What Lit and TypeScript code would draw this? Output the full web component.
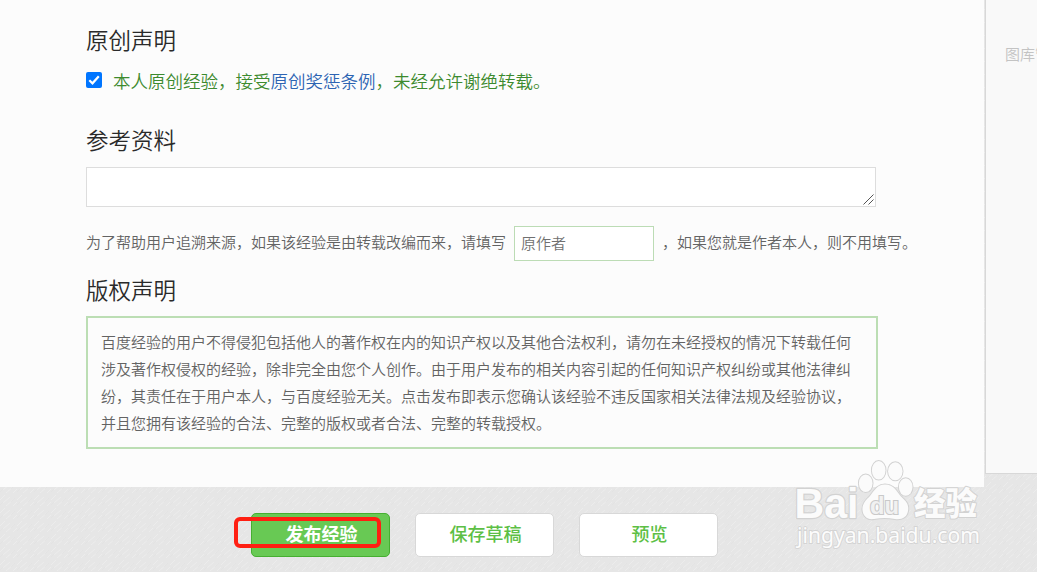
import { LitElement, html, css, svg } from "lit";
import { customElement } from "lit/decorators.js";

@customElement("baidu-mark")
class BaiduMark extends LitElement {
  static styles = css`
    :host { display: block; width: 200px; height: 100px; }
    svg { display: block; }
    .shape { fill: #fbfbfb; stroke: #d2d2d2; stroke-width: 2; paint-order: stroke; stroke-linejoin: round; }
    .brand { font-family: "Liberation Sans", sans-serif; font-weight: 700; font-size: 42px; stroke-width: 2.4; }
    .du { font-family: "Liberation Sans", sans-serif; font-weight: 700; font-size: 24px; fill: #f1f1f1; stroke: #c9c9c9; stroke-width: 2.2; paint-order: stroke; }
    .name { font-family: "Noto Sans CJK SC", sans-serif; font-weight: 900; font-size: 32px; }
    .url { font-family: "Noto Sans", sans-serif; font-size: 21px; font-weight: 400; fill: #fcfcfc; stroke: #d4d4d4; stroke-width: 1.8; paint-order: stroke; }
  `;
  render() {
    const toes = [[75.7, 33.3, 6.8, 8.8], [88.7, 20.3, 6.8, 9.3], [105.3, 21.3, 7.2, 9], [115.7, 37, 6.8, 8.8]];
    return html`<svg width="200" height="100" viewBox="0 0 200 100">
      <text class="shape brand" x="4.500" y="68" textLength="64" lengthAdjust="spacingAndGlyphs">Bai</text>
      ${toes.map(([x, y, rx, ry]) => svg`<ellipse class="shape" cx=${x} cy=${y} rx=${rx} ry=${ry} />`)}
      <path class="shape" d="M95 34.5C104 34.5 107 42 111 46.5C117 52 119 55 118 61C117 67 112 70 105 69C98 67.5 91 67.5 84 69C77 70 73 66 72.500 60C72 54 76 50 80 46C84 41 87 34.500 95 34.500Z" />
      <text class="du" x="80" y="64" textLength="29" lengthAdjust="spacingAndGlyphs">du</text>
      <text class="shape name" x="124" y="65" textLength="63" lengthAdjust="spacingAndGlyphs">经验</text>
      <text class="url" x="7" y="92.500" textLength="183" lengthAdjust="spacingAndGlyphs">jingyan.baidu.com</text>
    </svg>`;
  }
}

@customElement("app-root")
class AppRoot extends LitElement {
  static styles = css`
    * { box-sizing: border-box; }
    :host {
      display: block; position: relative; width: 1037px; height: 572px; overflow: hidden;
      font-family: "Noto Sans CJK SC", sans-serif; font-size: 15px; color: #636363; font-weight: 350;
      background: #e6e6e6;
    }
    .texture { position: absolute; inset: 0; display: block; }
    .page { position: relative; display: flex; align-items: flex-start; height: 487px; }
    main { width: 984px; height: 487px; padding: 21px 0 0 86px; background: #fcfcfc; flex: none; }
    h2 { margin: 0; font-size: 22.5px; font-weight: 350; line-height: 37px; height: 38px; color: #2a2a2a; }
    .declare { display: flex; align-items: center; height: 41px; margin-bottom: 21px; font-size: 17.5px; color: #3c8a2e; white-space: nowrap; }
    .declare span { padding-top: 2px; }
    .check { display: block; width: 16px; height: 16px; margin: 0 11px 0 0; }
    .declare a { color: #2d64b3; }
    .reference { display: block; width: 790px; height: 40px; margin-top: 8px; border: 1px solid #ddd; background: #fff; padding: 0; resize: none; }
    .refbox { display: grid; width: 790px; }
    .refbox > * { grid-area: 1 / 1; }
    .grip { align-self: end; justify-self: end; margin: 0 2px 2px 0; }
    .source { display: flex; align-items: center; height: 35px; margin: 19px 0 10px; white-space: nowrap; }
    .source span { padding-bottom: 4px; }
    .author { width: 140px; height: 35px; margin: 0 8px; padding: 0 6px 3px; border: 1px solid #bcdcb5; background: #fff; font: inherit; color: #757575; outline: none; }
    .author::placeholder { color: #707070; opacity: 1; }
    .notice { width: 792px; height: 133px; margin-top: 7px; padding: 10px 13px; border: 2px solid #bcdeb4; line-height: 27px; white-space: nowrap; }
    aside { width: 52px; height: 474px; margin-left: 1px; padding: 43px 0 0 19px; border: solid #d8d8d8; border-width: 0 0 1px 1px; background: #f9f9f9; color: #c3c3c3; line-height: 21px; white-space: nowrap; overflow: hidden; flex: none; }
    .actions { position: relative; display: flex; gap: 25px; padding: 26px 0 0 251px; }
    .btn { width: 139px; height: 44px; padding: 0 0 3px 2px; border: 1px solid #d8d8d8; border-radius: 5px; background: #fff; color: #5dbf45; font: 500 18px/39px "Noto Sans CJK SC", sans-serif; text-align: center; }
    .primary { background: #68c954; border-color: #46af31; color: #fff; font-weight: 700; }
    .marker { position: absolute; left: 234px; top: 517px; width: 147px; height: 31px; border: 4px solid #ff1f12; border-radius: 6px; }
    baidu-mark { position: absolute; left: 790px; top: 450px; }
  `;
  render() {
    return html`
      <svg class="texture" width="1037" height="572">
        <defs><pattern id="weave" width="17" height="13" patternUnits="userSpaceOnUse">
          <path d="M0 6L5 1M3 9L10 3M6 12L14 5M13 12L17 8" stroke="#ededed" stroke-width=".8" />
          <path d="M0 11L3 8M11 8L15 4" stroke="#e2e2e2" stroke-width=".8" />
        </pattern></defs>
        <rect width="1037" height="572" fill="url(#weave)" />
      </svg>
      <div class="page">
        <main>
          <h2>原创声明</h2>
          <div class="declare">
            <svg class="check" viewBox="0 0 16 16"><rect width="16" height="16" rx="2" fill="#0075ff" /><path d="M3.300 8.200L6.500 11.300L12.800 4.300" fill="none" stroke="#fff" stroke-width="2.200" /></svg>
            <span>本人原创经验，接受<a>原创奖惩条例</a>，未经允许谢绝转载。</span>
          </div>
          <h2>参考资料</h2>
          <div class="refbox">
            <textarea class="reference"></textarea>
            <svg class="grip" width="11" height="11"><path d="M.5 10.500L10.500 .5M5.500 10.500L10.500 5.500" stroke="#555" fill="none" /></svg>
          </div>
          <div class="source"><span>为了帮助用户追溯来源，如果该经验是由转载改编而来，请填写</span><input class="author" placeholder="原作者" /><span>，如果您就是作者本人，则不用填写。</span></div>
          <h2>版权声明</h2>
          <div class="notice">
            百度经验的用户不得侵犯包括他人的著作权在内的知识产权以及其他合法权利，请勿在未经授权的情况下转载任何<br />涉及著作权侵权的经验，除非完全由您个人创作。由于用户发布的相关内容引起的任何知识产权纠纷或其他法律纠<br />纷，其责任在于用户本人，与百度经验无关。点击发布即表示您确认该经验不违反国家相关法律法规及经验协议，<br />并且您拥有该经验的合法、完整的版权或者合法、完整的转载授权。
          </div>
        </main>
        <aside>图库管</aside>
      </div>
      <div class="actions">
        <button class="btn primary">发布经验</button>
        <button class="btn">保存草稿</button>
        <button class="btn">预览</button>
      </div>
      <div class="marker"></div>
      <baidu-mark></baidu-mark>
    `;
  }
}
